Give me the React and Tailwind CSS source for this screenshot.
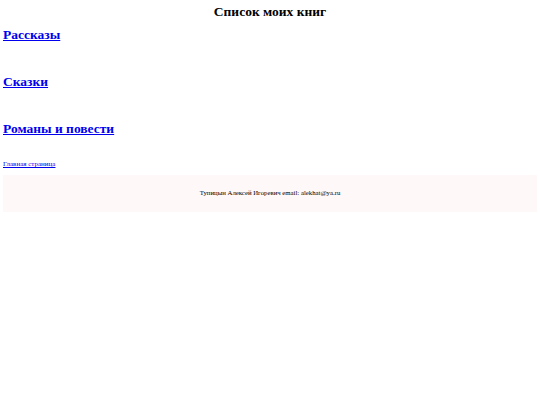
import React from 'react';

const sections = ['Рассказы', 'Сказки', 'Романы и повести'];

const App = () => {
  return (
    <div className="min-h-[405px] bg-white px-[3px] font-['Liberation_Serif',serif] text-black">
      <h1 className="pt-[4px] text-center text-[13.5px] font-bold leading-[16px]">Список моих книг</h1>

      <div className="mt-[6px] flex flex-col gap-[29px]">
        {sections.map((title) => (
          <h2 key={title} className="text-[13.5px] font-bold leading-[18px]">
            <a href="#" className="text-[#0000ee] underline">
              {title}
            </a>
          </h2>
        ))}
      </div>

      <div className="mt-[22px] text-[7px] leading-[9px]">
        <a href="#" className="text-[#0000ee] underline">
          Главная страница
        </a>
      </div>

      <footer className="mt-[6px] flex h-[37px] items-center justify-center bg-[#fff8f8] text-[6.75px]">
        Тупицын Алексей Игоревич email: alekhat@ya.ru
      </footer>
    </div>
  );
};

export default App;
